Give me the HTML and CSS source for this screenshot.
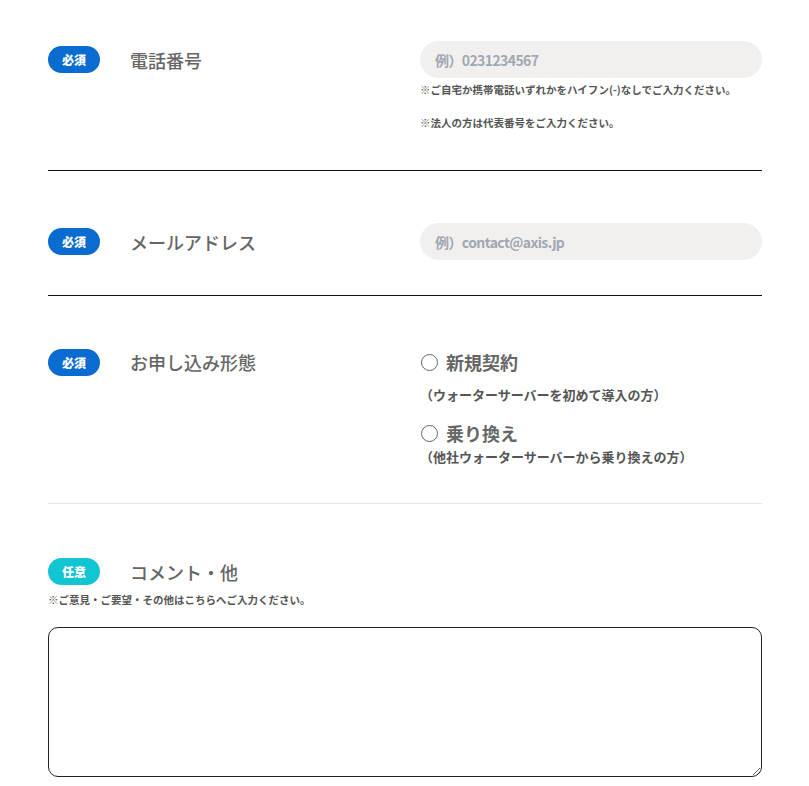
FILE: index.html
```html
<!DOCTYPE html>
<html lang="ja">
<head>
    <meta charset="UTF-8">
    <meta name="viewport" content="width=device-width, initial-scale=1.0">
    <title>お問い合わせフォーム</title>
    <link rel="stylesheet" href="styles.css">
</head>
<body>
    <form class="contact-form">
        <div class="row row-tel">
            <div class="head">
                <span class="badge required">必須</span>
                <label class="label" for="tel">電話番号</label>
            </div>
            <div class="field">
                <input type="tel" id="tel" name="tel" placeholder="例）0231234567">
                <p class="note">※ご自宅か携帯電話いずれかをハイフン(-)なしでご入力ください。</p>
                <p class="note note-second">※法人の方は代表番号をご入力ください。</p>
            </div>
        </div>

        <div class="row row-mail">
            <div class="head">
                <span class="badge required">必須</span>
                <label class="label" for="mail">メールアドレス</label>
            </div>
            <div class="field">
                <input type="email" id="mail" name="mail" placeholder="例）contact@axis.jp">
            </div>
        </div>

        <div class="row row-plan">
            <div class="head">
                <span class="badge required">必須</span>
                <span class="label">お申し込み形態</span>
            </div>
            <div class="field">
                <label class="radio">
                    <input type="radio" name="plan" value="new">
                    <span class="radio-mark"></span>
                    <span class="radio-text">新規契約</span>
                </label>
                <p class="radio-sub">（ウォーターサーバーを初めて導入の方）</p>
                <label class="radio radio-second">
                    <input type="radio" name="plan" value="switch">
                    <span class="radio-mark"></span>
                    <span class="radio-text">乗り換え</span>
                </label>
                <p class="radio-sub radio-sub-tight">（他社ウォーターサーバーから乗り換えの方）</p>
            </div>
        </div>

        <div class="row-comment">
            <div class="head">
                <span class="badge optional">任意</span>
                <label class="label" for="comment">コメント・他</label>
            </div>
            <p class="note">※ご意見・ご要望・その他はこちらへご入力ください。</p>
            <textarea id="comment" name="comment"></textarea>
        </div>
    </form>
</body>
</html>
```

FILE: styles.css
```css
body {
    margin: 0;
    padding: 0 47px 0 48px;
    background: #fff;
    font-family: "Noto Sans CJK JP", "Noto Sans", sans-serif;
    color: #666;
}
.contact-form {
    width: 714px;
}
.row {
    display: flex;
    padding: 52px 0 35px;
    border-bottom: 1px solid #111;
}
.row-tel {
    padding-top: 41px;
    padding-bottom: 37px;
}
.row-plan {
    padding-bottom: 36px;
    border-bottom-color: #e6e6e6;
}
.head {
    width: 372px;
    height: 37px;
    display: flex;
    align-items: center;
    flex-shrink: 0;
}
.row-plan .head {
    height: 28px;
}
.badge {
    width: 52px;
    height: 27px;
    border-radius: 14px;
    color: #fff;
    font-size: 12px;
    font-weight: 900;
    line-height: 27px;
    text-align: center;
    margin-right: 30px;
}
.required {
    background-color: #0a6bd0;
}
.optional {
    background-color: #12c5d3;
}
.label {
    font-size: 18px;
    font-weight: 500;
    color: #666;
}
.field {
    flex: 1;
}
input[type="tel"],
input[type="email"] {
    display: block;
    width: 100%;
    height: 37px;
    box-sizing: border-box;
    padding: 0 15px;
    border: none;
    border-radius: 19px;
    background-color: #f1f0ef;
    font-family: inherit;
    font-size: 14px;
    font-weight: bold;
    letter-spacing: -0.6px;
    color: #444;
    outline: none;
}
input::placeholder {
    color: #a2a7b3;
}
.note {
    margin: 2px 0 0;
    font-size: 10.5px;
    font-weight: bold;
    line-height: 20px;
    color: #555;
}
.note-second {
    margin-top: 13px;
}
.radio {
    display: flex;
    align-items: center;
    height: 28px;
    cursor: pointer;
}
.radio input {
    display: none;
}
.radio-mark {
    width: 17px;
    height: 17px;
    box-sizing: border-box;
    border: 1px solid #666;
    border-radius: 50%;
    margin: 0 8px 0 1px;
}
.radio input:checked + .radio-mark {
    border: 5px solid #0a6bd0;
}
.radio-text {
    font-size: 18px;
    font-weight: bold;
    color: #666;
}
.radio-second {
    margin-top: 14px;
}
.radio-sub {
    margin: 9px 0 0;
    font-size: 13px;
    font-weight: bold;
    line-height: 20px;
    color: #555;
}
.radio-sub-tight {
    margin-top: 0;
}
.row-comment {
    padding-top: 49px;
}
.row-comment .note {
    margin-top: 0;
}
textarea {
    display: block;
    width: 100%;
    height: 150px;
    box-sizing: border-box;
    margin-top: 17px;
    border: 1px solid #222;
    border-radius: 10px;
    font-family: inherit;
    font-size: 14px;
}
```
